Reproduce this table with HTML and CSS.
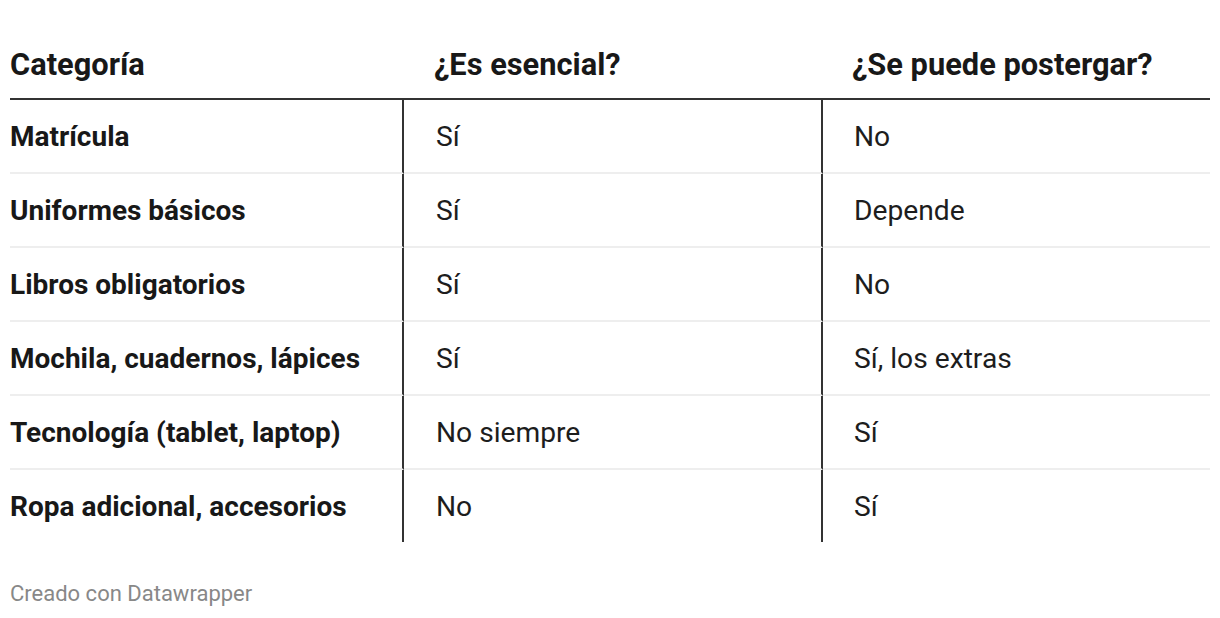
FILE: index.html
```html
<!DOCTYPE html>
<html lang="es">
<head>
<meta charset="utf-8">
<title>Tabla</title>
<link rel="stylesheet" href="styles.css">
</head>
<body>
<div class="wrap">
  <table class="tbl">
    <thead>
      <tr>
        <th class="c1">Categoría</th>
        <th class="c2">¿Es esencial?</th>
        <th class="c3">¿Se puede postergar?</th>
      </tr>
    </thead>
    <tbody>
      <tr><td class="c1">Matrícula</td><td class="c2">Sí</td><td class="c3">No</td></tr>
      <tr><td class="c1">Uniformes básicos</td><td class="c2">Sí</td><td class="c3">Depende</td></tr>
      <tr><td class="c1">Libros obligatorios</td><td class="c2">Sí</td><td class="c3">No</td></tr>
      <tr><td class="c1">Mochila, cuadernos, lápices</td><td class="c2">Sí</td><td class="c3">Sí, los extras</td></tr>
      <tr><td class="c1">Tecnología (tablet, laptop)</td><td class="c2">No siempre</td><td class="c3">Sí</td></tr>
      <tr class="last"><td class="c1">Ropa adicional, accesorios</td><td class="c2">No</td><td class="c3">Sí</td></tr>
    </tbody>
  </table>
  <div class="foot">Creado con Datawrapper</div>
</div>
</body>
</html>
```

FILE: styles.css
```css
html, body {
  margin: 0;
  padding: 0;
  background: #ffffff;
}
body {
  font-family: Roboto, "Liberation Sans", sans-serif;
  color: #1d1d1d;
}
.wrap {
  padding: 30px 10px 0 10px;
}
.tbl {
  width: 1200px;
  border-collapse: separate;
  border-spacing: 0;
  table-layout: fixed;
}
.tbl th,
.tbl td {
  box-sizing: border-box;
  padding: 0;
  text-align: left;
  vertical-align: middle;
}
.tbl th {
  height: 70px;
  font-size: 30.8px;
  font-weight: 700;
  color: #181818;
  border-bottom: 2px solid #333333;
}
.tbl td {
  height: 74px;
  font-size: 28.2px;
  font-weight: 400;
  border-bottom: 2px solid #eeeeee;
}
.tbl tr.last td {
  border-bottom: none;
  height: 72px;
}
.tbl .c1 {
  width: 394px;
  font-weight: 700;
  color: #181818;
}
.tbl td.c1 {
  font-size: 28px;
}
.tbl .c2 {
  width: 419px;
  padding-left: 32px;
}
.tbl td.c1,
.tbl td.c2 {
  border-right: 2px solid #333333;
}
.tbl .c3 {
  padding-left: 31px;
}
.tbl th.c2 { padding-left: 30px; }
.tbl th.c3 { padding-left: 29px; }
.foot {
  margin-top: 39px;
  font-size: 22px;
  color: #888888;
}
```
